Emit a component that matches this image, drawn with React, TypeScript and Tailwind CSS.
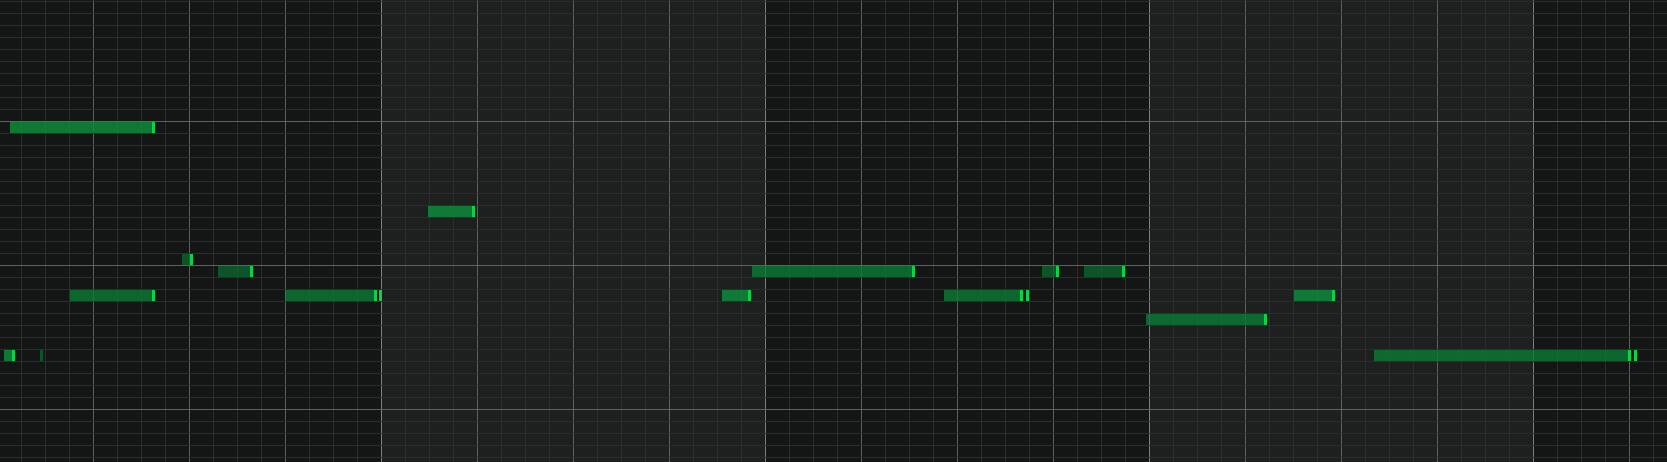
import React from 'react';

// piano roll: 24px columns, 12px rows
const COLS = 69;
const ROWS = 39;

type Tone = 'hi' | 'mid' | 'lo';

interface Note {
  x: number;
  row: number;
  w: number;
  tone: Tone;
  tail?: boolean;
}

const NOTES: Note[] = [
  { x: 10, row: 10, w: 145, tone: 'hi', tail: true },
  { x: 428, row: 17, w: 47, tone: 'hi', tail: true },
  { x: 182, row: 21, w: 11, tone: 'lo', tail: true },
  { x: 218, row: 22, w: 35, tone: 'lo', tail: true },
  { x: 70, row: 24, w: 85, tone: 'mid', tail: true },
  { x: 286, row: 24, w: 91, tone: 'mid', tail: true },
  { x: 379, row: 24, w: 4, tone: 'mid', tail: true },
  { x: 4, row: 29, w: 11, tone: 'hi', tail: true },
  { x: 40, row: 29, w: 3, tone: 'lo' },
  { x: 752, row: 22, w: 163, tone: 'mid', tail: true },
  { x: 722, row: 24, w: 29, tone: 'hi', tail: true },
  { x: 944, row: 24, w: 79, tone: 'mid', tail: true },
  { x: 1026, row: 24, w: 3, tone: 'mid', tail: true },
  { x: 1042, row: 22, w: 17, tone: 'lo', tail: true },
  { x: 1084, row: 22, w: 41, tone: 'lo', tail: true },
  { x: 1146, row: 26, w: 121, tone: 'mid', tail: true },
  { x: 1294, row: 24, w: 41, tone: 'hi', tail: true },
  { x: 1374, row: 29, w: 257, tone: 'mid', tail: true },
  { x: 1634, row: 29, w: 3, tone: 'mid', tail: true },
];

const toneClass: Record<Tone, string> = {
  hi: 'bg-[#0f8a3d]/85',
  mid: 'bg-[#0d7a36]/80',
  lo: 'bg-[#0b6a30]/75',
};

function Column({ k }: { k: number }) {
  const light = Math.floor((k + 1) / 16) % 2 === 1;
  const bar = k % 16 === 15;
  const beat = k % 4 === 3;
  return (
    <div
      className={clsxLite(
        'shrink-0 w-[24px] h-full border-l',
        light ? 'bg-[#1e201f]' : 'bg-[#141615]',
        bar ? 'border-[#4e9a6b]' : beat ? 'border-[#3a7653]' : 'border-[#2c2e2d]'
      )}
    />
  );
}

function clsxLite(...c: string[]) {
  return c.join(' ');
}

function NoteBlock({ n }: { n: Note }) {
  const top = 2 + n.row * 12;
  const onlyTail = n.w <= 4 && n.tail;
  return (
    <div
      className="absolute h-[11px] flex"
      style={{ left: n.x, top, width: n.w }}
    >
      {!onlyTail && <div className={`flex-1 ${toneClass[n.tone]}`} />}
      {n.tail && <div className="w-[3px] h-full bg-[#0ad24c]" />}
    </div>
  );
}

export default function App() {
  return (
    <div className="relative w-[1667px] h-[462px] overflow-hidden bg-[#141615]">
      {/* 세로 칸 + 배경 */}
      <div className="flex h-full">
        <div className="shrink-0 w-[21px] h-full bg-[#141615]" />
        {Array.from({ length: COLS }, (_, k) => (
          <Column key={k} k={k} />
        ))}
      </div>

      {/* 가로 줄 */}
      <div className="absolute inset-0 flex flex-col pointer-events-none">
        <div className="shrink-0 h-px" />
        {Array.from({ length: ROWS }, (_, r) => (
          <div
            key={r}
            className={`shrink-0 h-[12px] border-t ${
              r % 12 === 10 ? 'border-[#3a7653]' : 'border-[#2c2e2d]'
            }`}
          />
        ))}
      </div>

      {/* 노트 */}
      <div className="absolute inset-0">
        {NOTES.map((n, i) => (
          <NoteBlock key={i} n={n} />
        ))}
      </div>
    </div>
  );
}
